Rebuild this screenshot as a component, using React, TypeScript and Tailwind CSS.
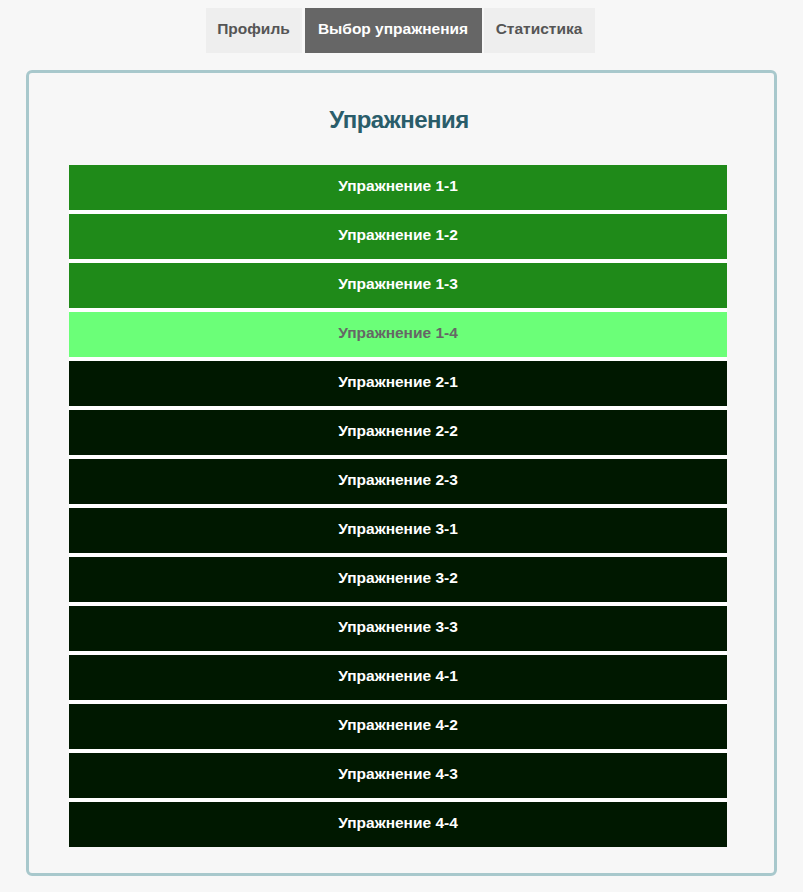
const rows: { label: string; tone: "done" | "current" | "locked" }[] = [
  { label: "Упражнение 1-1", tone: "done" },
  { label: "Упражнение 1-2", tone: "done" },
  { label: "Упражнение 1-3", tone: "done" },
  { label: "Упражнение 1-4", tone: "current" },
  { label: "Упражнение 2-1", tone: "locked" },
  { label: "Упражнение 2-2", tone: "locked" },
  { label: "Упражнение 2-3", tone: "locked" },
  { label: "Упражнение 3-1", tone: "locked" },
  { label: "Упражнение 3-2", tone: "locked" },
  { label: "Упражнение 3-3", tone: "locked" },
  { label: "Упражнение 4-1", tone: "locked" },
  { label: "Упражнение 4-2", tone: "locked" },
  { label: "Упражнение 4-3", tone: "locked" },
  { label: "Упражнение 4-4", tone: "locked" },
];

const toneStyle = {
  done: "bg-[#1f8a19] text-white",
  current: "bg-[#6bff78] text-[#666666]",
  locked: "bg-[#001800] text-white",
};

export default function App() {
  return (
    <div className="min-h-[892px] bg-[#f7f7f7] font-['Liberation_Sans',Arial,sans-serif] pt-[8px]">
      <div className="flex justify-center gap-[2px] pr-[3px]">
        <button className="h-[45px] w-[96px] pb-[4px] bg-[#eeeeee] text-[#555555] font-bold text-[15.5px]">Профиль</button>
        <button className="h-[45px] w-[177px] pb-[4px] ml-[1px] bg-[#666666] text-white font-bold text-[15.5px]">Выбор упражнения</button>
        <button className="h-[45px] w-[111px] pb-[4px] bg-[#eeeeee] text-[#555555] font-bold text-[15.5px]">Статистика</button>
      </div>

      <div className="mx-[26px] mt-[17px] border-[3px] border-[#a8c8cc] rounded-[6px] pb-[26px]">
        <h1 className="text-center text-[#2a5d6a] text-[24px] tracking-[-0.5px] pt-[31px] pb-[30px] leading-[31px] font-bold pr-[5px]">
          Упражнения
        </h1>
        <div className="ml-[40px] w-[658px] flex flex-col gap-[4px] bg-white">
          {rows.map((r) => (
            <div
              key={r.label}
              className={"h-[45px] pb-[4px] flex items-center justify-center font-bold text-[15.5px] " + toneStyle[r.tone]}
            >
              {r.label}
            </div>
          ))}
        </div>
      </div>
    </div>
  );
}
